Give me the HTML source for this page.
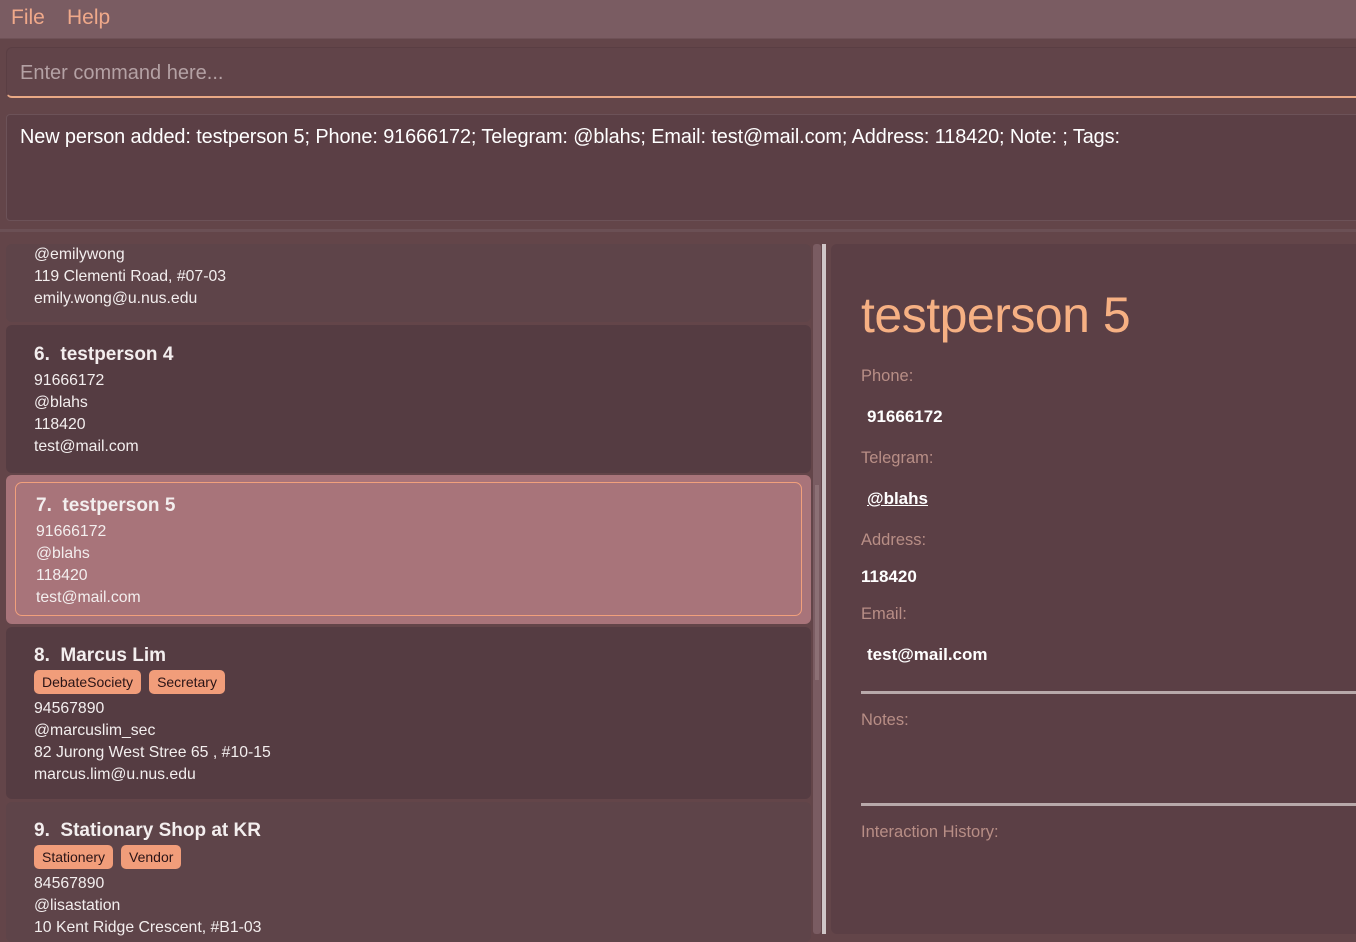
<!DOCTYPE html>
<html><head><meta charset="utf-8"><style>
*{margin:0;padding:0;box-sizing:border-box}
body{width:1356px;height:941px;background:#634549;font-family:"Liberation Sans",sans-serif;position:relative;overflow:hidden;color:#fff}
.abs{position:absolute}
.menu{left:0;top:0;width:1356px;height:39px;background:#7a5c62;border-bottom:1px solid #6e5156}
.menu span{position:absolute;top:6px;font-size:21px;color:#f0a98a}
.cmd{left:6px;top:47px;width:1360px;height:51px;background:#614449;border:1px solid #5a3e43;border-bottom:2px solid #e9a985;border-radius:6px}
.cmd span{position:absolute;left:13px;top:14px;font-size:20px;color:#b4a1a4}
.res{left:6px;top:114px;width:1360px;height:107px;background:#5b3f45;border:1px solid #6c5258;border-radius:4px}
.res span{position:absolute;left:13px;top:11px;font-size:19.9px;color:#fff;white-space:nowrap;letter-spacing:-0.1px}
.card{position:absolute;left:6px;width:805px;border-radius:6px;padding-left:28px}
.c1{background:#5e4449}.c2{background:#553c42}
.nm{font-size:19px;font-weight:bold;color:#f3eeee;white-space:nowrap}
.ln{font-size:15.8px;line-height:22px;color:#f3eeee;white-space:nowrap}
.tag{display:inline-block;background:#f19d7a;color:#2a1416;font-size:14px;padding:4px 8px;border-radius:5px;margin-right:8px}
.det{left:831px;top:244px;width:530px;height:690px;background:#5b3f45;border-radius:6px}
.lbl{position:absolute;left:30px;font-size:16.5px;color:#b88e86}
.val{position:absolute;font-size:17px;font-weight:bold;color:#fff}
.hr{position:absolute;left:30px;width:500px;height:3px;background:#b8a9aa}
</style></head><body>
<div class="abs menu"><span style="left:11px">File</span><span style="left:67px">Help</span></div>
<div class="abs cmd"><span>Enter command here...</span></div>
<div class="abs res"><span>New person added: testperson 5; Phone: 91666172; Telegram: @blahs; Email: test@mail.com; Address: 118420; Note: ; Tags:</span></div>
<div class="abs" style="left:0;top:229px;width:1356px;height:3px;background:#6b5055"></div>

<div class="card c1" style="top:244px;height:78px;padding-top:0">
<div class="ln">@emilywong</div><div class="ln">119 Clementi Road, #07-03</div><div class="ln">emily.wong@u.nus.edu</div></div>

<div class="card c2" style="top:325px;height:148px;padding-top:19px">
<div class="nm">6.&nbsp; testperson 4</div>
<div class="ln" style="margin-top:4px">91666172</div><div class="ln">@blahs</div><div class="ln">118420</div><div class="ln">test@mail.com</div></div>

<div class="card" style="top:475px;height:149px;background:#a8747a;padding:0">
<div style="position:absolute;left:9px;top:7px;width:787px;height:134px;border:1.5px solid #f1a07c;border-radius:7px;padding:12px 0 0 20px">
<div class="nm">7.&nbsp; testperson 5</div>
<div class="ln" style="margin-top:4px">91666172</div><div class="ln">@blahs</div><div class="ln">118420</div><div class="ln">test@mail.com</div></div></div>

<div class="card c2" style="top:627px;height:172px;padding-top:18px">
<div class="nm">8.&nbsp; Marcus Lim</div>
<div style="margin-top:3px;height:28px"><span class="tag">DebateSociety</span><span class="tag">Secretary</span></div>
<div class="ln">94567890</div><div class="ln">@marcuslim_sec</div><div class="ln">82 Jurong West Stree 65 , #10-15</div><div class="ln">marcus.lim@u.nus.edu</div></div>

<div class="card c1" style="top:802px;height:140px;padding-top:18px">
<div class="nm">9.&nbsp; Stationary Shop at KR</div>
<div style="margin-top:3px;height:28px"><span class="tag">Stationery</span><span class="tag">Vendor</span></div>
<div class="ln">84567890</div><div class="ln">@lisastation</div><div class="ln">10 Kent Ridge Crescent, #B1-03</div></div>

<div class="abs" style="left:813px;top:244px;width:8px;height:690px;background:#7a5c62;border-radius:3px"></div>
<div class="abs" style="left:815px;top:485px;width:4px;height:195px;background:#8c7075"></div>
<div class="abs" style="left:822px;top:244px;width:4px;height:690px;background:#cfc6c7"></div>

<div class="abs det">
<div style="position:absolute;left:30px;top:42px;font-size:50px;color:#f6b083;white-space:nowrap;letter-spacing:-0.5px">testperson 5</div>
<div class="lbl" style="top:123px">Phone:</div>
<div class="val" style="left:36px;top:163px">91666172</div>
<div class="lbl" style="top:205px">Telegram:</div>
<div class="val" style="left:36px;top:245px;text-decoration:underline">@blahs</div>
<div class="lbl" style="top:287px">Address:</div>
<div class="val" style="left:30px;top:323px">118420</div>
<div class="lbl" style="top:361px">Email:</div>
<div class="val" style="left:36px;top:401px">test@mail.com</div>
<div class="hr" style="top:447px"></div>
<div class="lbl" style="top:467px">Notes:</div>
<div class="hr" style="top:559px"></div>
<div class="lbl" style="top:579px">Interaction History:</div>
</div>
</body></html>
